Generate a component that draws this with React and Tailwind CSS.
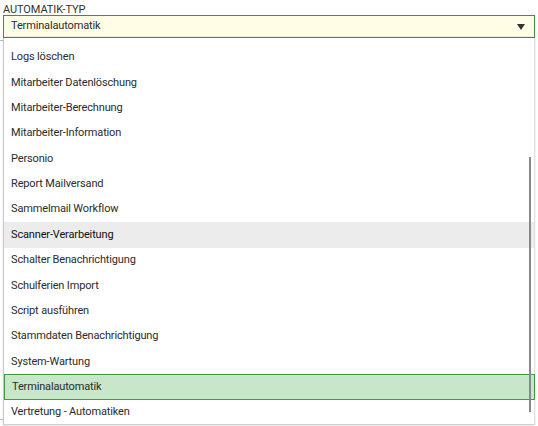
import { useState } from 'react';

const TYPES = [
  'Logs löschen',
  'Mitarbeiter Datenlöschung',
  'Mitarbeiter-Berechnung',
  'Mitarbeiter-Information',
  'Personio',
  'Report Mailversand',
  'Sammelmail Workflow',
  'Scanner-Verarbeitung',
  'Schalter Benachrichtigung',
  'Schulferien Import',
  'Script ausführen',
  'Stammdaten Benachrichtigung',
  'System-Wartung',
  'Terminalautomatik',
  'Vertretung - Automatiken',
];

export default function App() {
  const [selected, setSelected] = useState('Terminalautomatik');
  const [hover, setHover] = useState('Scanner-Verarbeitung');

  return (
    <div className="relative w-[538px] h-[426px] bg-white overflow-hidden text-[#2b2b2b] font-['Roboto','Liberation_Sans',sans-serif]">
      {/* table lines peeking out behind the open list */}
      <div className="absolute left-0 top-[40px] w-[3px] h-[380px] border-t border-b border-[#bbb]" />

      <div className="pl-[3px] pt-[4px] text-[11px] leading-[11px] uppercase tracking-[-0.1px] text-[#333]">Automatik-Typ</div>

      <div className="mx-[3px] h-[23px] flex items-center justify-between border border-[#3f8f3f] bg-[#fffde6] pl-[7px] pr-[9px] text-[11px] tracking-[-0.15px] shadow-[inset_0_-1px_0_rgba(0,0,0,0.06)]">
        <span>{selected}</span>
        <svg width="8" height="6" viewBox="0 0 8 6">
          <path d="M0 0H8L4 6Z" fill="#333" />
        </svg>
      </div>

      {/* open option list */}
      <div className="relative mx-[3px] h-[387px] border-l border-r border-b border-l-[#c8c8c8] border-r-[#e0e0e0] border-b-[#cfcfcf] bg-white pt-[7px] shadow-[0_1px_2px_rgba(0,0,0,0.12)]">
        {TYPES.map(t => {
          const isSel = t === selected;
          const isHover = t === hover && !isSel;
          return (
            <div
              key={t}
              onMouseEnter={() => setHover(t)}
              onClick={() => setSelected(t)}
              className={`h-[25.35px] flex items-center pl-[7px] text-[11px] tracking-[-0.15px] cursor-pointer ${
                isSel
                  ? 'bg-[#c8e6c9] border border-[#3f9a3f] pl-[6px] -mr-[1px]'
                  : isHover
                  ? 'bg-[#ececec] text-[#111]'
                  : ''
              }`}
            >
              {t}
            </div>
          );
        })}
        <div className="absolute right-[3px] top-[119px] w-[2px] h-[255px] bg-[#888]" />
      </div>
    </div>
  );
}
